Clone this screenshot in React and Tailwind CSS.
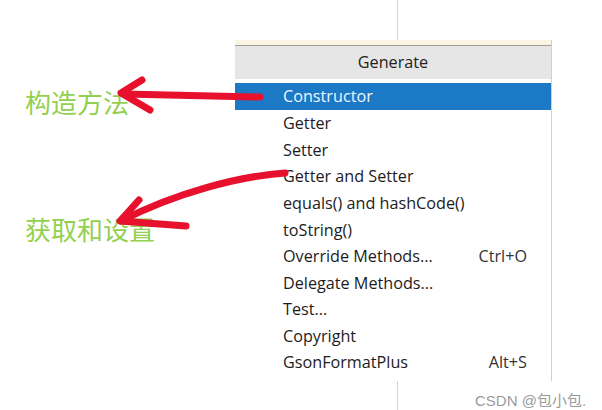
import React from 'react';

const items = [
  { label: 'Constructor', active: true },
  { label: 'Getter' },
  { label: 'Setter' },
  { label: 'Getter and Setter' },
  { label: 'equals() and hashCode()' },
  { label: 'toString()' },
  { label: 'Override Methods...', shortcut: 'Ctrl+O' },
  { label: 'Delegate Methods...' },
  { label: 'Test...' },
  { label: 'Copyright' },
  { label: 'GsonFormatPlus', shortcut: 'Alt+S' },
];

const sans = { fontFamily: '"Open Sans", "Noto Sans CJK SC", sans-serif' };
const cjk = { fontFamily: '"Noto Sans CJK SC", sans-serif' };

function Arrows() {
  return (
    <svg
      className="absolute inset-0 pointer-events-none"
      width="602"
      height="410"
      viewBox="0 0 602 410"
      fill="none"
      stroke="#e8112d"
      strokeWidth="7"
      strokeLinecap="round"
      strokeLinejoin="round"
    >
      {/* arrow to Constructor */}
      <path d="M260 97 L124 94" />
      <path d="M142 80 L121 93 L150 110" />
      {/* arrow to Getter and Setter */}
      <path d="M285 173 C 240 176, 175 193, 121 221" />
      <path d="M139 200 L120 221 L186 226" />
    </svg>
  );
}

export default function App() {
  return (
    <div className="relative w-[602px] h-[410px] bg-white overflow-hidden flex" style={sans}>
      {/* labels */}
      <div className="w-[235px] shrink-0" style={cjk}>
        <div className="pl-[25px] pt-[87px] text-[26px] leading-[30px] text-[#92d050]">构造方法</div>
        <div className="pl-[25px] pt-[97px] text-[26px] leading-[30px] text-[#92d050]">获取和设置</div>
      </div>

      {/* menu column */}
      <div className="w-[317px] shrink-0 flex flex-col">
        <div className="h-[40px] shrink-0 ml-[162px] border-l border-[#d4d4d4]" />
        <div className="shrink-0 border-r border-[#d0d0d0] bg-white">
          <div className="h-[5px] bg-[#fbf5e4]" />
          <div className="h-[34px] bg-[#e6e6e6] border-t border-[#9e9e9e] flex items-center justify-center text-[16.2px] text-[#222]">
            Generate
          </div>
          <div className="h-[4px] bg-white" />
          <div className="flex flex-col pb-[5px]">
            {items.map((it, i) => (
              <div
                key={i}
                className={
                  it.active
                    ? 'h-[27px] shrink-0 flex items-center justify-between pl-[48px] pr-[24px] bg-[#1b79c6] text-[#eef6ff] text-[16.2px]'
                    : 'h-[26.6px] shrink-0 flex items-center justify-between pl-[48px] pr-[24px] text-[#1c1c1c] text-[16.2px]'
                }
              >
                <span>{it.label}</span>
                {it.shortcut && <span className="text-[#333]">{it.shortcut}</span>}
              </div>
            ))}
          </div>
        </div>
        <div className="flex-1 min-h-0 ml-[162px] border-l border-[#d4d4d4]">
          <div className="pt-[10px] pl-[77px] text-[15px] leading-[20px] text-[#9b9b9b] whitespace-nowrap" style={{ fontFamily: '"Liberation Sans", "Noto Sans CJK SC", sans-serif' }}>
            CSDN @包小包.
          </div>
        </div>
      </div>
      <div className="flex-1" />

      <Arrows />
    </div>
  );
}
